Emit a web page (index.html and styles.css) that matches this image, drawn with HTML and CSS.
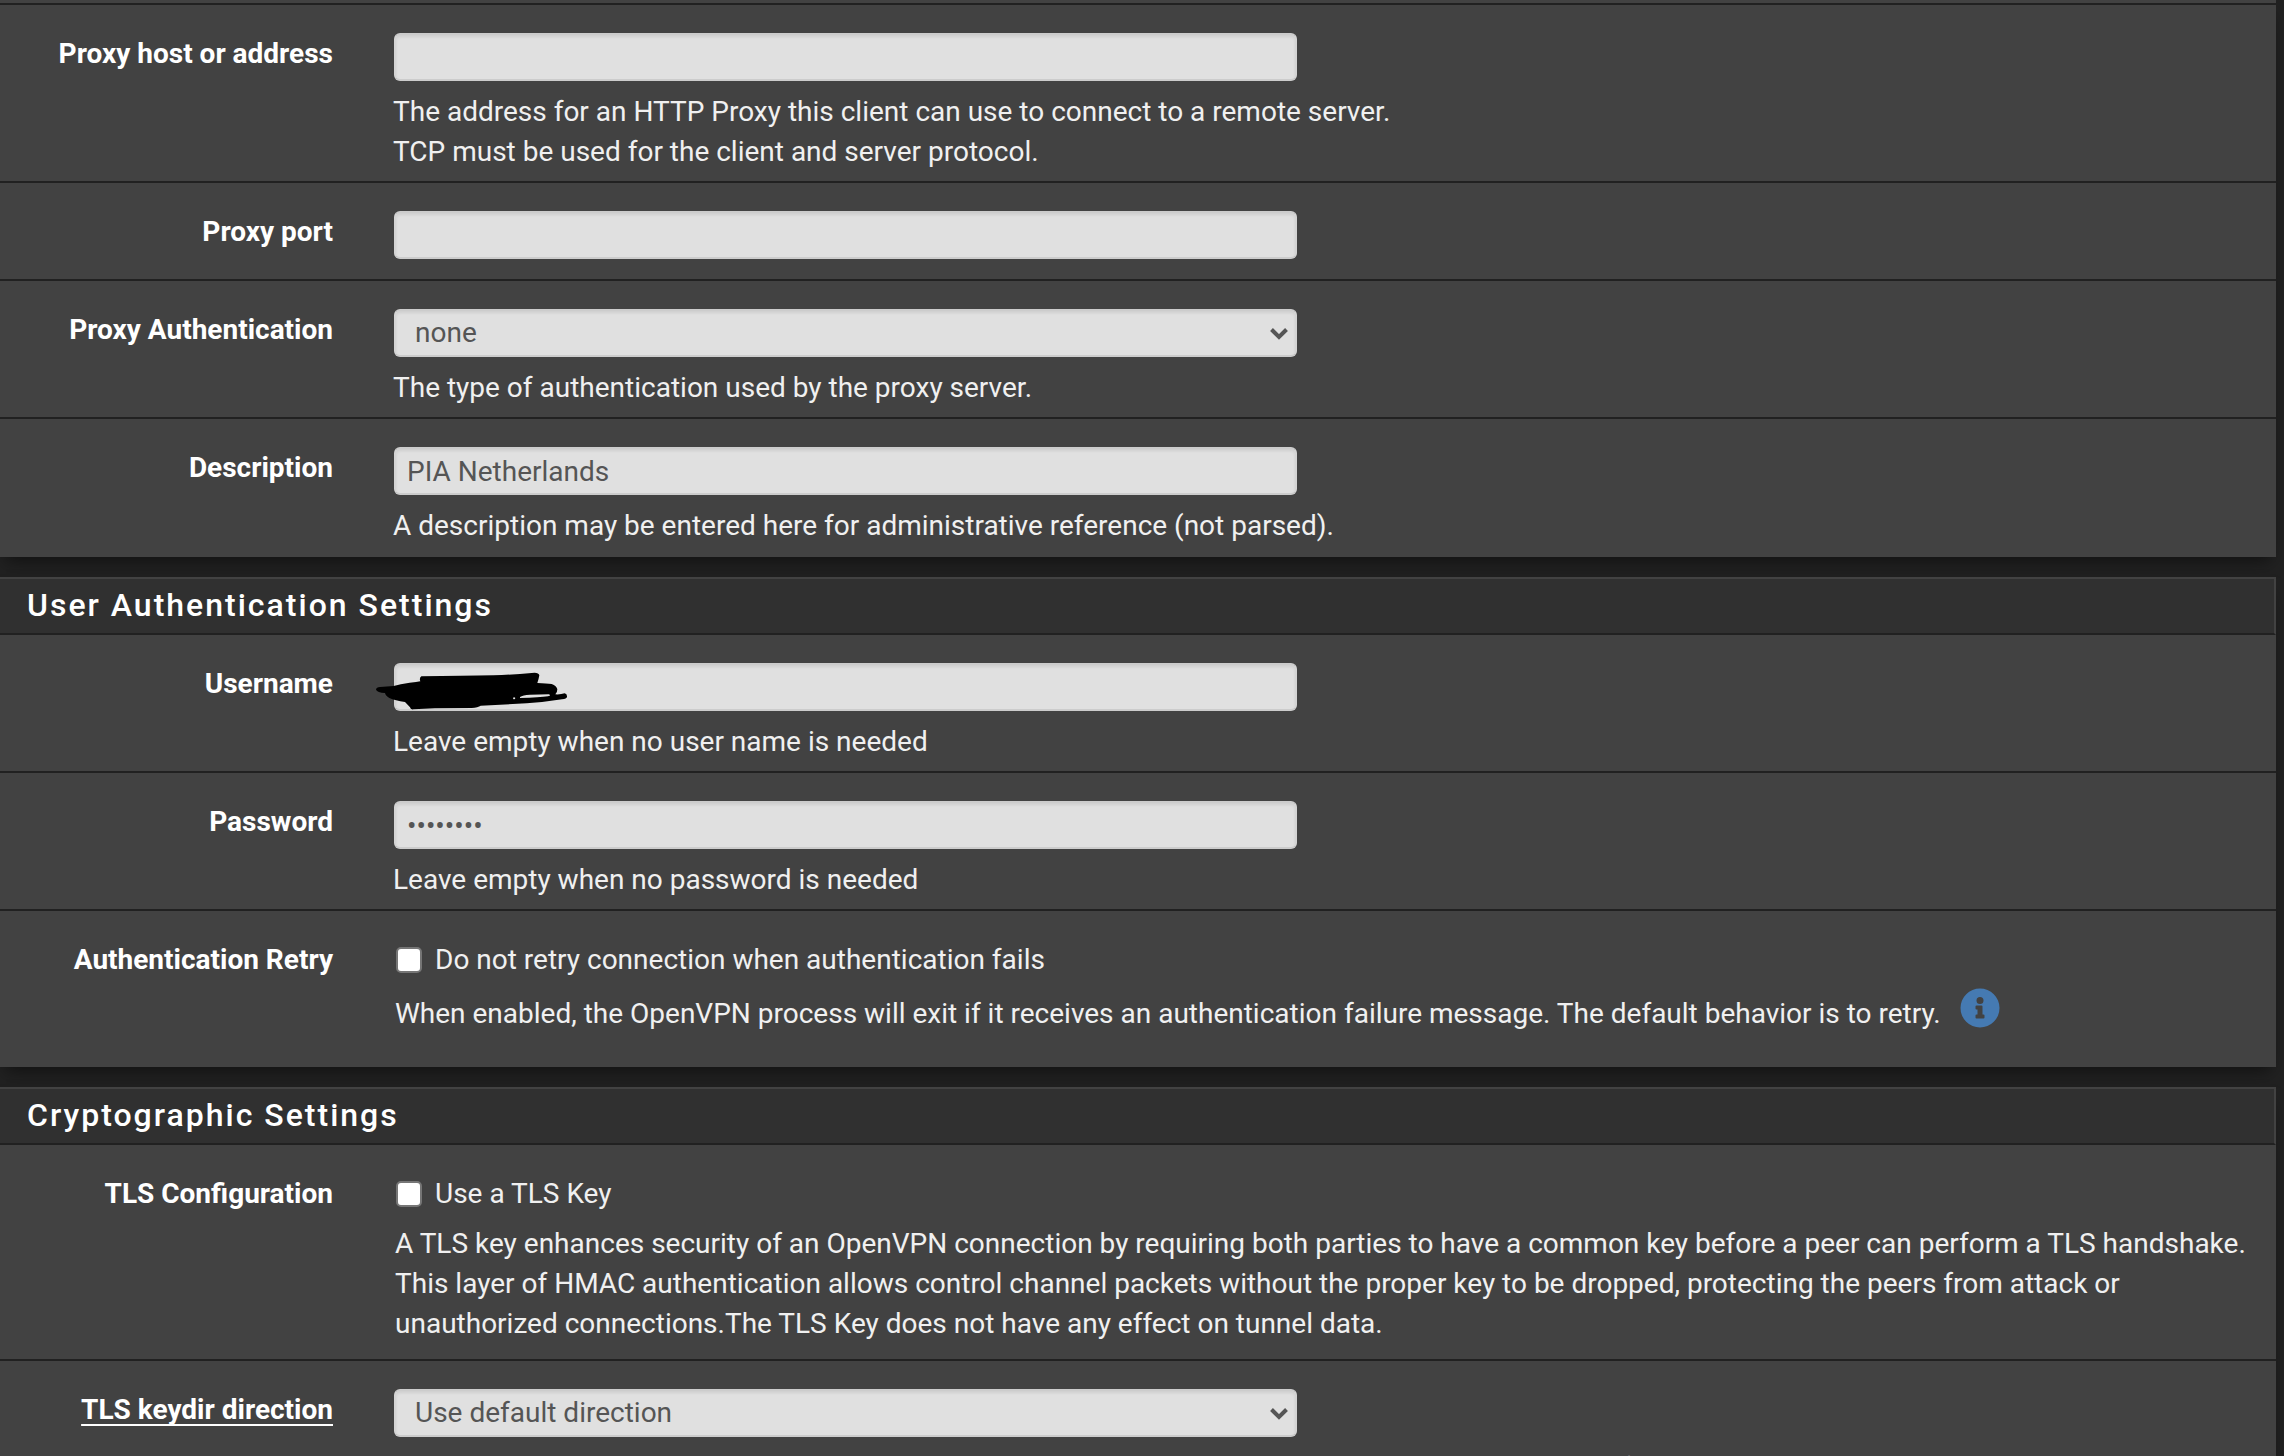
FILE: index.html
```html
<!DOCTYPE html>
<html lang="en">
<head>
<meta charset="utf-8">
<title>OpenVPN Client</title>
<link rel="stylesheet" href="styles.css">
</head>
<body>
<form class="page">
  <section class="panel panel-continued">
    <div class="row">
      <label class="row-label" for="proxy-host">Proxy host or address</label>
      <div class="row-body">
        <input class="control" type="text" id="proxy-host">
        <p class="help">The address for an HTTP Proxy this client can use to connect to a remote server.<br>TCP must be used for the client and server protocol.</p>
      </div>
    </div>
    <div class="row">
      <label class="row-label" for="proxy-port">Proxy port</label>
      <div class="row-body no-help">
        <input class="control" type="text" id="proxy-port">
      </div>
    </div>
    <div class="row">
      <label class="row-label" for="proxy-auth">Proxy Authentication</label>
      <div class="row-body">
        <div class="select-wrap">
          <select class="control" id="proxy-auth"><option>none</option><option>basic</option><option>ntlm</option></select>
          <svg class="chevron" viewBox="0 0 20 14" aria-hidden="true"><path d="M2.500 2.500 10 10l7.500-7.500"/></svg>
        </div>
        <p class="help">The type of authentication used by the proxy server.</p>
      </div>
    </div>
    <div class="row">
      <label class="row-label" for="description">Description</label>
      <div class="row-body">
        <input class="control" type="text" id="description" value="PIA Netherlands">
        <p class="help">A description may be entered here for administrative reference (not parsed).</p>
      </div>
    </div>
  </section>

  <section class="panel">
    <h2 class="panel-heading">User Authentication Settings</h2>
    <div class="row">
      <label class="row-label" for="username">Username</label>
      <div class="row-body">
        <div class="redacted">
          <input class="control" type="text" id="username">
          <svg class="scribble" viewBox="45 96 579 114" aria-hidden="true"><path fill-rule="evenodd" d="M48 149Q49 142 60 141L101 138Q120 132 149 128L168 126L181 124Q177 114 184 109Q310 108 400 106Q460 104 515 99Q536 96 538 106Q536 118 532 129Q560 130 575 132Q590 138 592 148Q592 157 586 163Q602 164 614 160Q622 161 621 171Q620 176 606 178Q550 187 500 190L362 197Q354 202 335 204L225 205L160 208Q151 209 150 202L135 186Q105 182 88 174Q76 166 75 159Q52 158 48 149ZM480 171Q488 165 510 164L566 163Q576 166 564 169Q540 173 480 174ZM459 174Q462 169 466 174Q465 179 460 177Z"/></svg>
        </div>
        <p class="help">Leave empty when no user name is needed</p>
      </div>
    </div>
    <div class="row">
      <label class="row-label" for="password">Password</label>
      <div class="row-body">
        <input class="control" type="password" id="password" value="password">
        <p class="help">Leave empty when no password is needed</p>
      </div>
    </div>
    <div class="row">
      <span class="row-label">Authentication Retry</span>
      <div class="row-body check-body with-info">
        <label class="check"><input type="checkbox" class="checkbox">Do not retry connection when authentication fails</label>
        <div class="info-line">
          <p class="help">When enabled, the OpenVPN process will exit if it receives an authentication failure message. The default behavior is to retry.</p>
          <button class="info" type="button" aria-label="More information">
            <svg viewBox="0 0 40 40" aria-hidden="true"><path fill-rule="evenodd" d="M20 .5a19.500 19.500 0 1 1 0 39 19.500 19.500 0 0 1 0-39ZM20 9a3.500 3.500 0 1 0 0 7 3.500 3.500 0 0 0 0-7ZM16.500 17.500q-1 0-1 1v2q0 1 1 1h1V26.500h-1q-1 0-1 1v2q0 1 1 1h7q1 0 1-1v-2q0-1-1-1h-1v-8q0-1-1-1Z"/></svg>
          </button>
        </div>
      </div>
    </div>
  </section>

  <section class="panel">
    <h2 class="panel-heading">Cryptographic Settings</h2>
    <div class="row">
      <span class="row-label">TLS Configuration</span>
      <div class="row-body check-body">
        <label class="check"><input type="checkbox" class="checkbox">Use a TLS Key</label>
        <p class="help">A TLS key enhances security of an OpenVPN connection by requiring both parties to have a common key before a peer can perform a TLS handshake. This layer of HMAC authentication allows control channel packets without the proper key to be dropped, protecting the peers from attack or unauthorized connections.The TLS Key does not have any effect on tunnel data.</p>
      </div>
    </div>
    <div class="row">
      <label class="row-label" for="keydir"><span class="required">TLS keydir direction</span></label>
      <div class="row-body">
        <div class="select-wrap">
          <select class="control" id="keydir"><option>Use default direction</option></select>
          <svg class="chevron" viewBox="0 0 20 14" aria-hidden="true"><path d="M2.500 2.500 10 10l7.500-7.500"/></svg>
        </div>
        <p class="help">The TLS Key Direction must be set to complementary values on the client and server. For example, if the server is set to 0, the client must be set to 1. Both may be set to omit the direction, in which case the TLS Key will be used bidirectionally.</p>
      </div>
    </div>
  </section>
</form>
</body>
</html>
```
FILE: styles.css
```css
* {
  box-sizing: border-box;
}

body {
  margin: 0;
  background: #212121;
  color: #f0f0f0;
  font-family: Roboto, sans-serif;
  font-size: 28px;
  line-height: 40px;
}

.page {
  display: flex;
  flex-direction: column;
  gap: 20px;
  padding-right: 8px;
}

.panel {
  padding-bottom: 2px;
  background: #424242;
  box-shadow: 0 10px 16px -6px rgba(0, 0, 0, 0.5);
}

.panel-continued {
  padding-top: 3px;
}

.panel-heading {
  margin: 0;
  padding: 6px 27px 8px;
  border: 2px solid #424242;
  border-bottom-color: #212121;
  border-left: 0;
  background: #303030;
  color: #fff;
  font-size: 32px;
  font-weight: 500;
  letter-spacing: 2px;
}

.row {
  display: grid;
  grid-template-columns: 333px 1fr;
  column-gap: 61px;
  padding-top: 28px;
  border-top: 2px solid #212121;
}

.panel-heading + .row {
  border-top: 0;
}

.row-label {
  padding-top: 1px;
  color: #fff;
  font-weight: 700;
  text-align: right;
}

.required {
  text-decoration: underline 2px;
  text-underline-offset: 5px;
  text-decoration-skip-ink: none;
}

.row-body {
  padding-bottom: 9px;
}

.no-help {
  padding-bottom: 20px;
}

.control {
  display: block;
  width: 100%;
  height: 48px;
  padding: 0 11px;
  border: 2px solid #ccc;
  border-color: #ccc #d4d4d4 #ccc #d4d4d4;
  border-radius: 6px;
  background: #e0e0e0;
  box-shadow: inset 0 2px 3px rgba(0, 0, 0, 0.08);
  color: #555;
  font: inherit;
}

input.control,
.select-wrap,
.redacted {
  width: 48%;
}

.redacted .control {
  width: 100%;
}

select.control {
  appearance: none;
  padding: 0 19px;
}

.select-wrap,
.redacted {
  position: relative;
}

.chevron {
  position: absolute;
  top: 18px;
  right: 8px;
  width: 20px;
  height: 14px;
  fill: none;
  stroke: #555;
  stroke-width: 4;
}

.scribble {
  position: absolute;
  top: 9px;
  left: -19px;
  width: 193px;
  height: 38px;
  fill: #000;
}

.help {
  margin: 11px 19px 0 -1px;
}

.check-body {
  padding-top: 1px;
  padding-bottom: 15px;
  padding-left: 2px;
}

.check-body .help {
  margin-top: 10px;
}

.check {
  display: flex;
  align-items: center;
  gap: 13px;
}

.checkbox {
  appearance: none;
  width: 26px;
  height: 26px;
  margin: 0;
  border: 2px solid #767676;
  border-radius: 5px;
  background: #fff;
}

.with-info {
  padding-bottom: 31px;
}

.info-line {
  display: flex;
  align-items: flex-start;
  padding-top: 4px;
}

.info {
  width: 40px;
  height: 40px;
  margin-top: 4px;
  padding: 0;
  border: 0;
  background: none;
}

.info svg {
  display: block;
  fill: #457ab2;
}
```
